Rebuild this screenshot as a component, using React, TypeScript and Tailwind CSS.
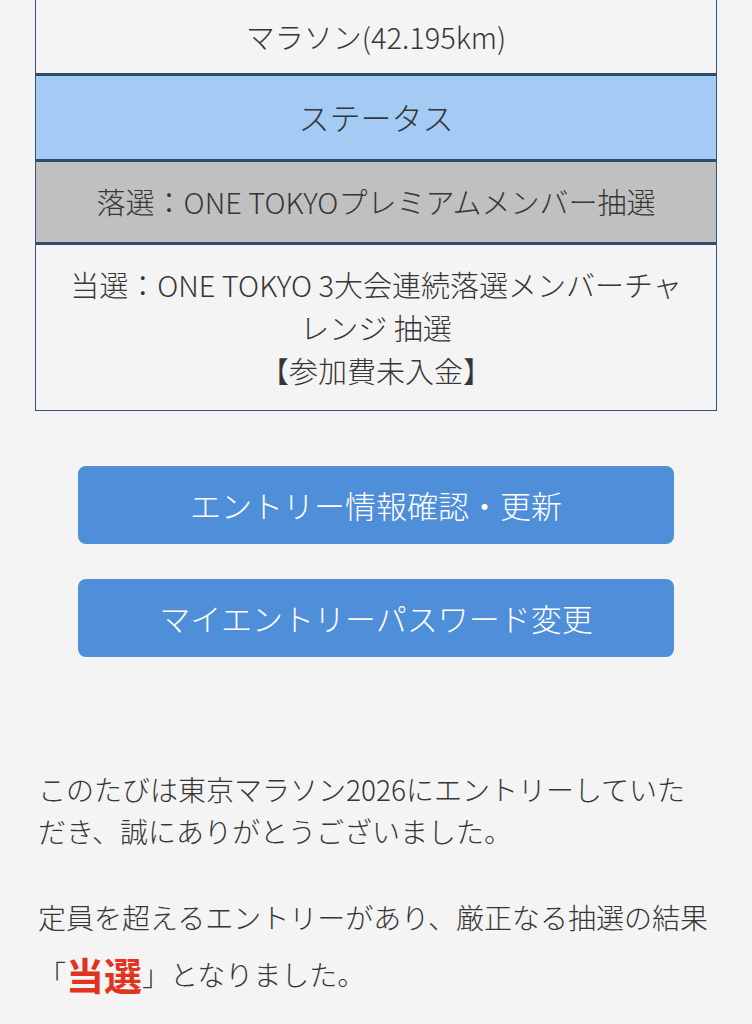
import React from "react";

export default function App() {
  const font = { fontFamily: '"Noto Sans CJK JP", "Noto Sans", sans-serif' };
  return (
    <div className="min-h-screen bg-[#f4f4f4] text-[#363636] font-light" style={font}>
      <div className="mx-[35px] border-x-[1.5px] border-b-[1.5px] border-[#34527a]">
        <div className="h-[73px] flex items-center justify-center text-[29px] whitespace-nowrap">
          マラソン(42.195km)
        </div>
        <div className="h-[86px] border-t-[3px] border-[#2e4a6c] bg-[#a3cbf4] flex items-center justify-center text-[31px] whitespace-nowrap">
          ステータス
        </div>
        <div className="h-[83px] border-t-[3px] border-[#2e4a6c] bg-[#c0c0c0] flex items-center justify-center text-[29px] whitespace-nowrap">
          落選：ONE TOKYOプレミアムメンバー抽選
        </div>
        <div className="h-[168px] border-t-[3px] border-[#2e4a6c] flex flex-col items-center justify-center text-[29px] leading-[43px] text-center pb-[0px] whitespace-nowrap">
          <div>当選：ONE TOKYO 3大会連続落選メンバーチャ</div>
          <div>レンジ 抽選</div>
          <div>【参加費未入金】</div>
        </div>
      </div>

      <div className="mt-[55px] mx-[78px] flex flex-col gap-[35px]">
        <div className="h-[78px] rounded-[8px] bg-[#4f8ed8] flex items-center justify-center text-white text-[31px] whitespace-nowrap">
          エントリー情報確認・更新
        </div>
        <div className="h-[78px] rounded-[8px] bg-[#4f8ed8] flex items-center justify-center text-white text-[31px] whitespace-nowrap">
          マイエントリーパスワード変更
        </div>
      </div>

      <div className="mt-[111px] ml-[38px] mr-[20px] text-[28px] leading-[42px] whitespace-nowrap">
        <div>このたびは東京マラソン2026にエントリーしていた</div>
        <div>だき、誠にありがとうございました。</div>
        <div className="mt-[44px]">定員を超えるエントリーがあり、厳正なる抽選の結果</div>
        <div className="mt-[8px] h-[56px] flex items-center">
          <span>「</span>
          <span className="text-[#e2331f] font-bold text-[38px] leading-none">当選</span>
          <span>」となりました。</span>
        </div>
      </div>
    </div>
  );
}
